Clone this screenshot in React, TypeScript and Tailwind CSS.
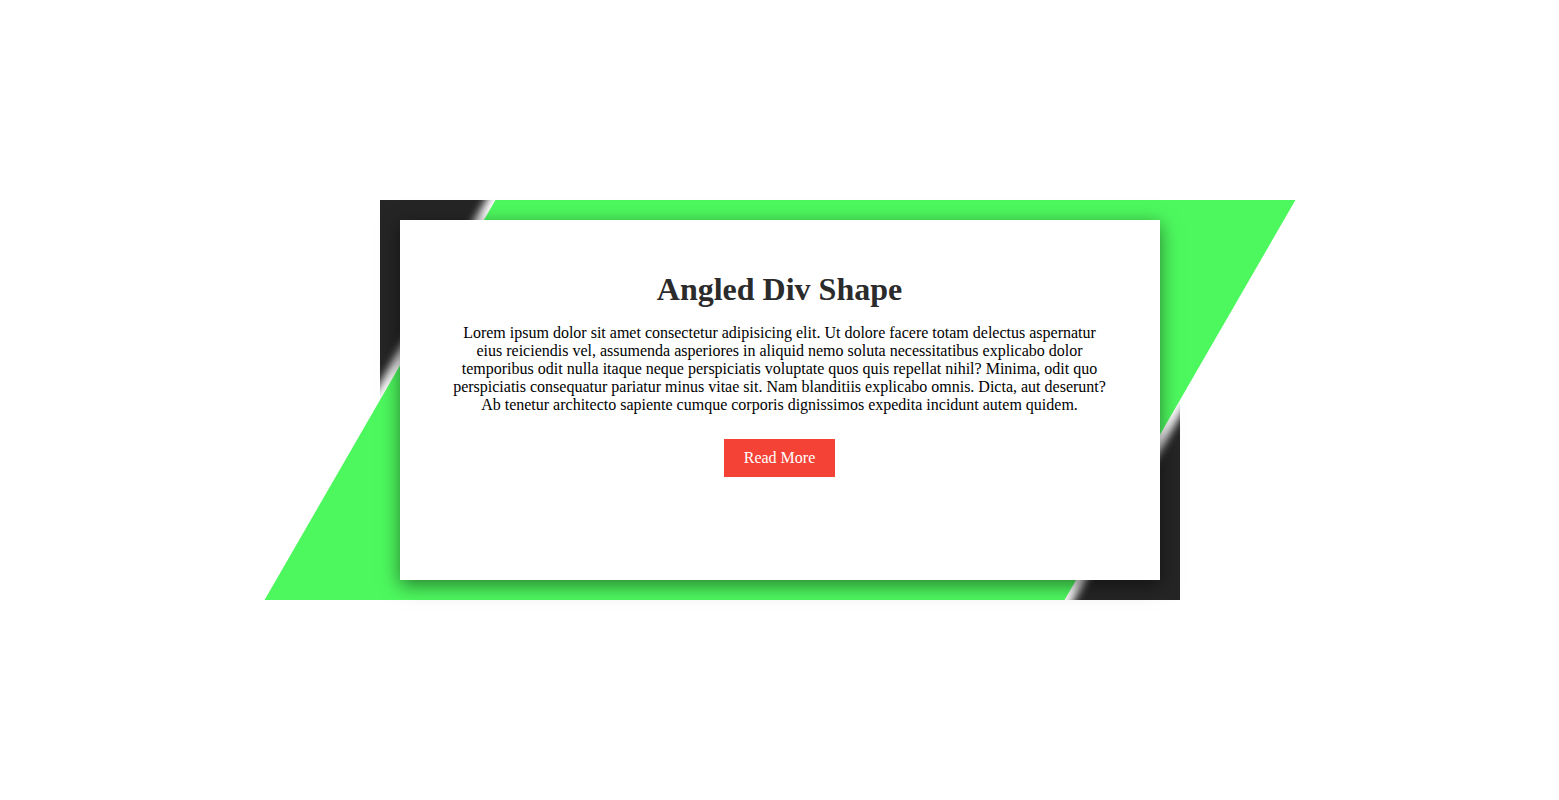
export default function App() {
  return (
    <div className="min-h-screen w-full bg-white flex items-center justify-center" style={{ fontFamily: '"Liberation Serif", "Times New Roman", serif' }}>
      <div className="relative w-[800px] h-[400px] bg-[#252525] p-5">
        <div className="absolute inset-0 bg-[#4df85e] -skew-x-30 shadow-[0_0_8px_9px_#ffffff]"></div>
        <div className="relative h-[360px] bg-white px-[50px] pt-[51px] text-center shadow-[0_5px_18px_rgba(0,0,0,0.5)]">
          <h2 className="text-[32px] leading-[37px] font-bold text-[#2b2b2b]">Angled Div Shape</h2>
          <p className="mt-4 text-[16px] leading-[18px] text-black">
            Lorem ipsum dolor sit amet consectetur adipisicing elit. Ut dolore facere totam delectus aspernatur eius reiciendis vel, assumenda asperiores in aliquid nemo soluta necessitatibus explicabo dolor temporibus odit nulla itaque neque perspiciatis voluptate quos quis repellat nihil? Minima, odit quo perspiciatis consequatur pariatur minus vitae sit. Nam blanditiis explicabo omnis. Dicta, aut deserunt? Ab tenetur architecto sapiente cumque corporis dignissimos expedita incidunt autem quidem.
          </p>
          <a className="mt-[25px] inline-block bg-[#f44336] px-5 py-[10px] text-[16px] leading-[18px] text-white">Read More</a>
        </div>
      </div>
    </div>
  );
}
